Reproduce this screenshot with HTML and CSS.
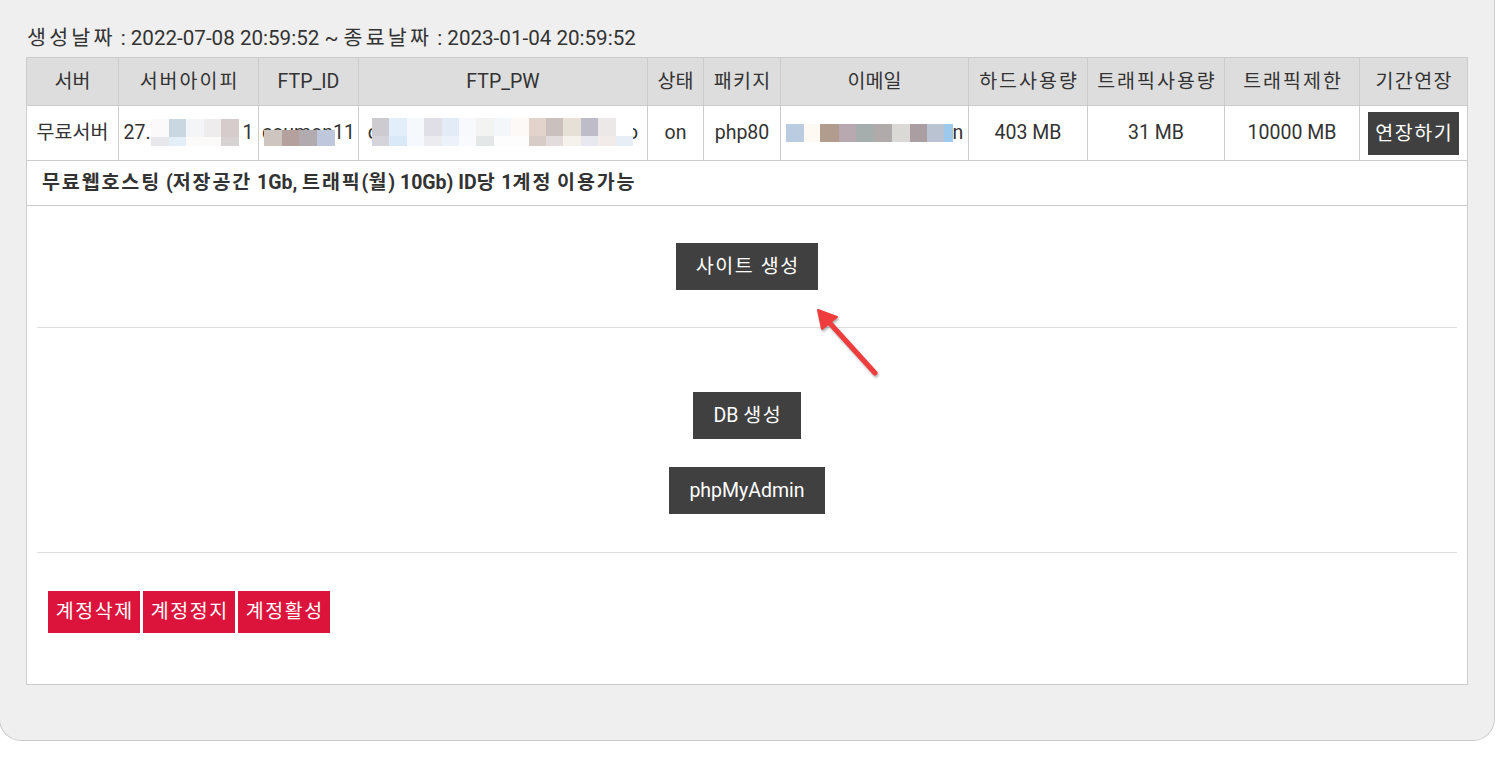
FILE: index.html
```html
<!DOCTYPE html>
<html lang="ko">
<head>
<meta charset="utf-8">
<title>호스팅 계정</title>
<link rel="stylesheet" href="styles.css">
</head>
<body>
<div class="panel">
  <div class="dates"><span class="ko">생성날짜</span> : 2022-07-08 20:59:52 ~ <span class="ko">종료날짜</span> : 2023-01-04 20:59:52</div>
  <div class="box">
    <table class="accounts">
      <colgroup>
        <col class="c1"><col class="c2"><col class="c3"><col class="c4"><col class="c5"><col class="c6"><col class="c7"><col class="c8"><col class="c9"><col class="c10"><col class="c11">
      </colgroup>
      <thead>
        <tr>
          <th class="ko-h">서버</th><th class="ko-h wide">서버아이피</th><th>FTP_ID</th><th>FTP_PW</th><th class="ko-h">상태</th><th class="ko-h mid">패키지</th><th class="ko-h">이메일</th><th class="ko-h wide">하드사용량</th><th class="ko-h wide">트래픽사용량</th><th class="ko-h wide">트래픽제한</th><th class="ko-h mid">기간연장</th>
        </tr>
      </thead>
      <tbody>
        <tr>
          <td>무료서버</td>
          <td>27.<span class="mosaic m-ip"></span>1</td>
          <td><span class="masked">coumon11<span class="mosaic m-id"></span></span></td>
          <td>c<span class="mosaic m-pw"></span>o</td>
          <td>on</td>
          <td>php80</td>
          <td><span class="mosaic m-mail"></span>n</td>
          <td>403 MB</td>
          <td>31 MB</td>
          <td>10000 MB</td>
          <td class="extend"><a class="btn dark small ko-btn">연장하기</a></td>
        </tr>
      </tbody>
    </table>
    <div class="notice"><span class="ko">무료웹호스팅</span> (<span class="ko">저장공간</span> 1Gb, <span class="ko">트래픽</span>(<span class="ko">월</span>) 10Gb) ID<span class="ko">당</span> 1<span class="ko">계정</span> <span class="ko">이용가능</span></div>
    <div class="content">
      <div class="section site">
        <a class="btn dark ko-btn">사이트 생성</a>
        <svg class="arrow" width="80" height="80" viewBox="0 0 80 80" aria-hidden="true">
          <line x1="70" y1="73" x2="22" y2="20" stroke="#ef3c3c" stroke-width="5" stroke-linecap="round"/>
          <polygon points="13,10 32,17 17,29" fill="#ef3c3c" stroke="#ef3c3c" stroke-width="2" stroke-linejoin="round"/>
        </svg>
      </div>
      <div class="section db">
        <a class="btn dark">DB <span class="ko-s">생성</span></a>
        <a class="btn dark">phpMyAdmin</a>
      </div>
      <div class="section actions">
        <a class="btn red action">계정삭제</a>
        <a class="btn red action">계정정지</a>
        <a class="btn red action">계정활성</a>
      </div>
    </div>
  </div>
</div>
</body>
</html>
```

FILE: styles.css
```css
* { box-sizing: border-box; }

html, body {
  margin: 0;
  padding: 0;
  background: #ffffff;
}

body {
  font-family: "Roboto", "Noto Sans CJK KR", sans-serif;
  font-size: 19.5px;
  color: #333333;
  overflow: hidden;
}

.panel {
  width: 1496px;
  margin-left: -1px;
  background: #efefef;
  border: 1px solid #cccccc;
  border-top: none;
  border-radius: 0 0 22px 22px;
  padding: 25px 26px 55px 26px;
}

.dates {
  font-size: 20.6px;
  line-height: 27px;
  margin-bottom: 5px;
  padding-left: 1px;
}

.dates .ko {
  letter-spacing: 3.2px;
}

.box {
  background: #ffffff;
  border: 1px solid #cccccc;
}

.accounts {
  width: 1440px;
  table-layout: fixed;
  border-collapse: separate;
  border-spacing: 0;
}

.c1 { width: 92px; }
.c2 { width: 140px; }
.c3 { width: 100px; }
.c4 { width: 289px; }
.c5 { width: 56px; }
.c6 { width: 77px; }
.c7 { width: 188px; }
.c8 { width: 119px; }
.c9 { width: 137px; }
.c10 { width: 135px; }
.c11 { width: 107px; }

.accounts th,
.accounts td {
  text-align: center;
  font-weight: normal;
  line-height: 27px;
  border-right: 1px solid #cccccc;
  border-bottom: 1px solid #cccccc;
  white-space: nowrap;
  overflow: hidden;
  vertical-align: middle;
}

.accounts th:last-child,
.accounts td:last-child {
  border-right: none;
}

.accounts th {
  background: #dddddd;
  padding: 10px 0;
}

.accounts th.mid {
  letter-spacing: 1.4px;
  text-indent: 1.4px;
}

.accounts th.wide {
  letter-spacing: 2px;
  text-indent: 2px;
}

.accounts td {
  padding: 13px 0 14px;
}

.accounts td.extend {
  padding: 5px 0;
}

.mosaic {
  display: inline-block;
  vertical-align: middle;
  position: relative;
}

.m-ip {
  width: 88px;
  height: 27px;
  margin-top: -3px;
  background:
    linear-gradient(to right, #fbf9f9 0 20%, #c9d7e1 20% 40%, #f3f5f6 40% 60%, #eeecec 60% 80%, #d6cccc 80% 100%) top / 100% 18px no-repeat,
    linear-gradient(to right, #e8e7ec 0 20%, #e3eff8 20% 40%, #fbfaf8 40% 60%, #fbfaf9 60% 80%, #d8d3d3 80% 100%) bottom / 100% 9px no-repeat;
  margin-right: 4px;
}

.masked {
  position: relative;
  display: inline-block;
}

.masked .m-id {
  position: absolute;
  left: 2px;
  top: 11px;
  width: 71px;
  height: 16px;
  background: linear-gradient(to right, #cec5c1 0 25%, #b4a19d 25% 50%, #b1abb0 50% 75%, #bfc7dd 75% 100%);
}

.m-pw {
  width: 261px;
  height: 28px;
  margin: -3px -6px 0 -6px;
  background:
    linear-gradient(to right, #cdcbd0 0 6.67%, #e2eefa 6.67% 13.33%, #f6f9fc 13.33% 20%, #e0dfe8 20% 26.67%, #e3ebf7 26.67% 33.33%, #f7f9fc 33.33% 40%, #f3f3f2 40% 46.67%, #f3f7f9 46.67% 53.33%, #fdf9f6 53.33% 60%, #e2d4cc 60% 66.67%, #cac0bd 66.67% 73.33%, #e6e0d6 73.33% 80%, #bdbcc8 80% 86.67%, #ebe8e7 86.67% 93.33%, #ffffff 93.33% 100%) top / 100% 18px no-repeat,
    linear-gradient(to right, #d5d4da 0 6.67%, #d9e9f7 6.67% 13.33%, #f5f8fc 13.33% 20%, #ecebf0 20% 26.67%, #edf1f9 26.67% 33.33%, #f8fafd 33.33% 40%, #e4e7e7 40% 46.67%, #fdfdfd 46.67% 53.33%, #fdfdfd 53.33% 60%, #d7ccc7 60% 66.67%, #e3dcdc 66.67% 73.33%, #f5f1ec 73.33% 80%, #e8e8f0 80% 86.67%, #f1ebea 86.67% 93.33%, #e7eef5 93.33% 100%) bottom / 100% 10px no-repeat;
}

.m-mail {
  width: 167px;
  height: 18px;
  margin-top: -2px;
  background: linear-gradient(to right, #bacde0 0 17.7px, #fef9f2 17.7px 34.3px, #b29c8e 34.3px 52.7px, #b8a9b0 52.7px 70px, #a6adad 70px 87.7px, #b1aaaa 87.7px 105.7px, #dbd9d5 105.7px 124px, #aa9ea2 124px 140.7px, #bac3d1 140.7px 158.3px, #9dcaec 158.3px 167px);
}

.notice {
  font-weight: bold;
  line-height: 27px;
  padding: 8px 15px 9px;
  border-bottom: 1px solid #cccccc;
}

.notice .ko {
  letter-spacing: 1.9px;
}

.content {
  padding: 0 10px;
}

.section {
  display: flex;
  flex-direction: column;
  align-items: center;
}

.site {
  position: relative;
  padding: 37px 0 37px;
  border-bottom: 1px solid #dddddd;
}

.db {
  padding: 64px 0 38px;
  gap: 28px;
  border-bottom: 1px solid #dddddd;
}

.actions {
  flex-direction: row;
  align-items: flex-start;
  gap: 3px;
  padding: 38px 11px 51px;
}

.btn {
  display: inline-block;
  color: #ffffff;
  line-height: 27px;
  padding: 10px 20px;
  text-decoration: none;
  white-space: nowrap;
}

.btn.ko-btn {
  letter-spacing: 1.6px;
  padding-right: 18.4px;
}

.btn .ko-s {
  letter-spacing: 1.5px;
  margin-right: -1.5px;
}

.btn.small {
  padding: 8px 5.5px 8px 7px;
}

.btn.action {
  width: 92px;
  padding: 7px 0 8px;
  text-align: center;
  letter-spacing: 1.6px;
  text-indent: 1.6px;
}

.dark { background: #404040; }
.red { background: #dc143c; }

.arrow {
  position: absolute;
  left: 768px;
  top: 94px;
  filter: drop-shadow(1px 2px 1px rgba(0, 0, 0, 0.3));
}
```
